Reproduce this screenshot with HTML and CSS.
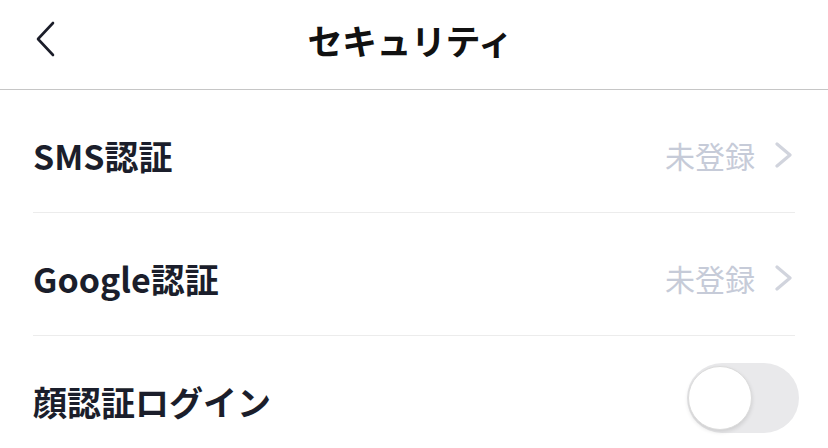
FILE: index.html
```html
<!DOCTYPE html>
<html lang="ja">
<head>
    <meta charset="UTF-8">
    <meta name="viewport" content="width=device-width, initial-scale=1.0">
    <title>セキュリティ</title>
    <link rel="stylesheet" href="styles.css">
</head>
<body>
    <div class="header">
        <a class="back" href="#">
            <svg width="24" height="40" viewBox="0 0 24 40"><path d="M19 3 L4 19 L19 35" fill="none" stroke="#1b1d29" stroke-width="2.6" stroke-linecap="round" stroke-linejoin="round"/></svg>
        </a>
        <h1>セキュリティ</h1>
    </div>
    <div class="list">
        <div class="row">
            <span class="label">SMS認証</span>
            <span class="value">未登録
                <svg class="arrow" width="22" height="26" viewBox="0 0 22 26"><path d="M4 2 L17 13 L4 24" fill="none" stroke="#d1d4dd" stroke-width="3.2" stroke-linecap="round" stroke-linejoin="round"/></svg>
            </span>
        </div>
        <div class="row">
            <span class="label">Google認証</span>
            <span class="value">未登録
                <svg class="arrow" width="22" height="26" viewBox="0 0 22 26"><path d="M4 2 L17 13 L4 24" fill="none" stroke="#d1d4dd" stroke-width="3.2" stroke-linecap="round" stroke-linejoin="round"/></svg>
            </span>
        </div>
        <div class="row last">
            <span class="label">顔認証ログイン</span>
            <span class="switch"><span class="knob"></span></span>
        </div>
    </div>
</body>
</html>
```

FILE: styles.css
```css
body { margin: 0; background: #fff; font-family: "Noto Sans CJK JP", "Noto Sans", sans-serif; color: #1b1e2b; }
.header { position: relative; height: 89px; border-bottom: 1px solid #c6c6c6; display: flex; align-items: center; justify-content: center; }
.header h1 { margin: 0; font-size: 35px; font-weight: 700; color: #111; letter-spacing: -0.5px; margin-right: 8px; margin-top: -10px; }
.back { position: absolute; left: 34px; top: 20px; display: block; }
.back svg { display: block; }
.list { padding: 0 33px; }
.row { height: 122px; border-bottom: 1px solid #ececec; display: flex; align-items: center; justify-content: space-between; }
.row.last { border-bottom: none; }
.label { font-size: 34px; font-weight: 700; margin-top: 8px; }
.value { display: flex; align-items: center; font-size: 30px; color: #c6cbd8; margin-top: 8px; }
.arrow { margin-left: 18px; display: block; }
.switch { position: relative; width: 112px; height: 70px; border-radius: 35px; background: #e9e9eb; margin-right: -4px; margin-top: 2px; }
.knob { position: absolute; left: 1px; top: 3px; width: 62px; height: 62px; border-radius: 50%; background: #fff; border: 1px solid #dcdcdc; box-shadow: 0 2px 4px rgba(0,0,0,0.12); }
```
